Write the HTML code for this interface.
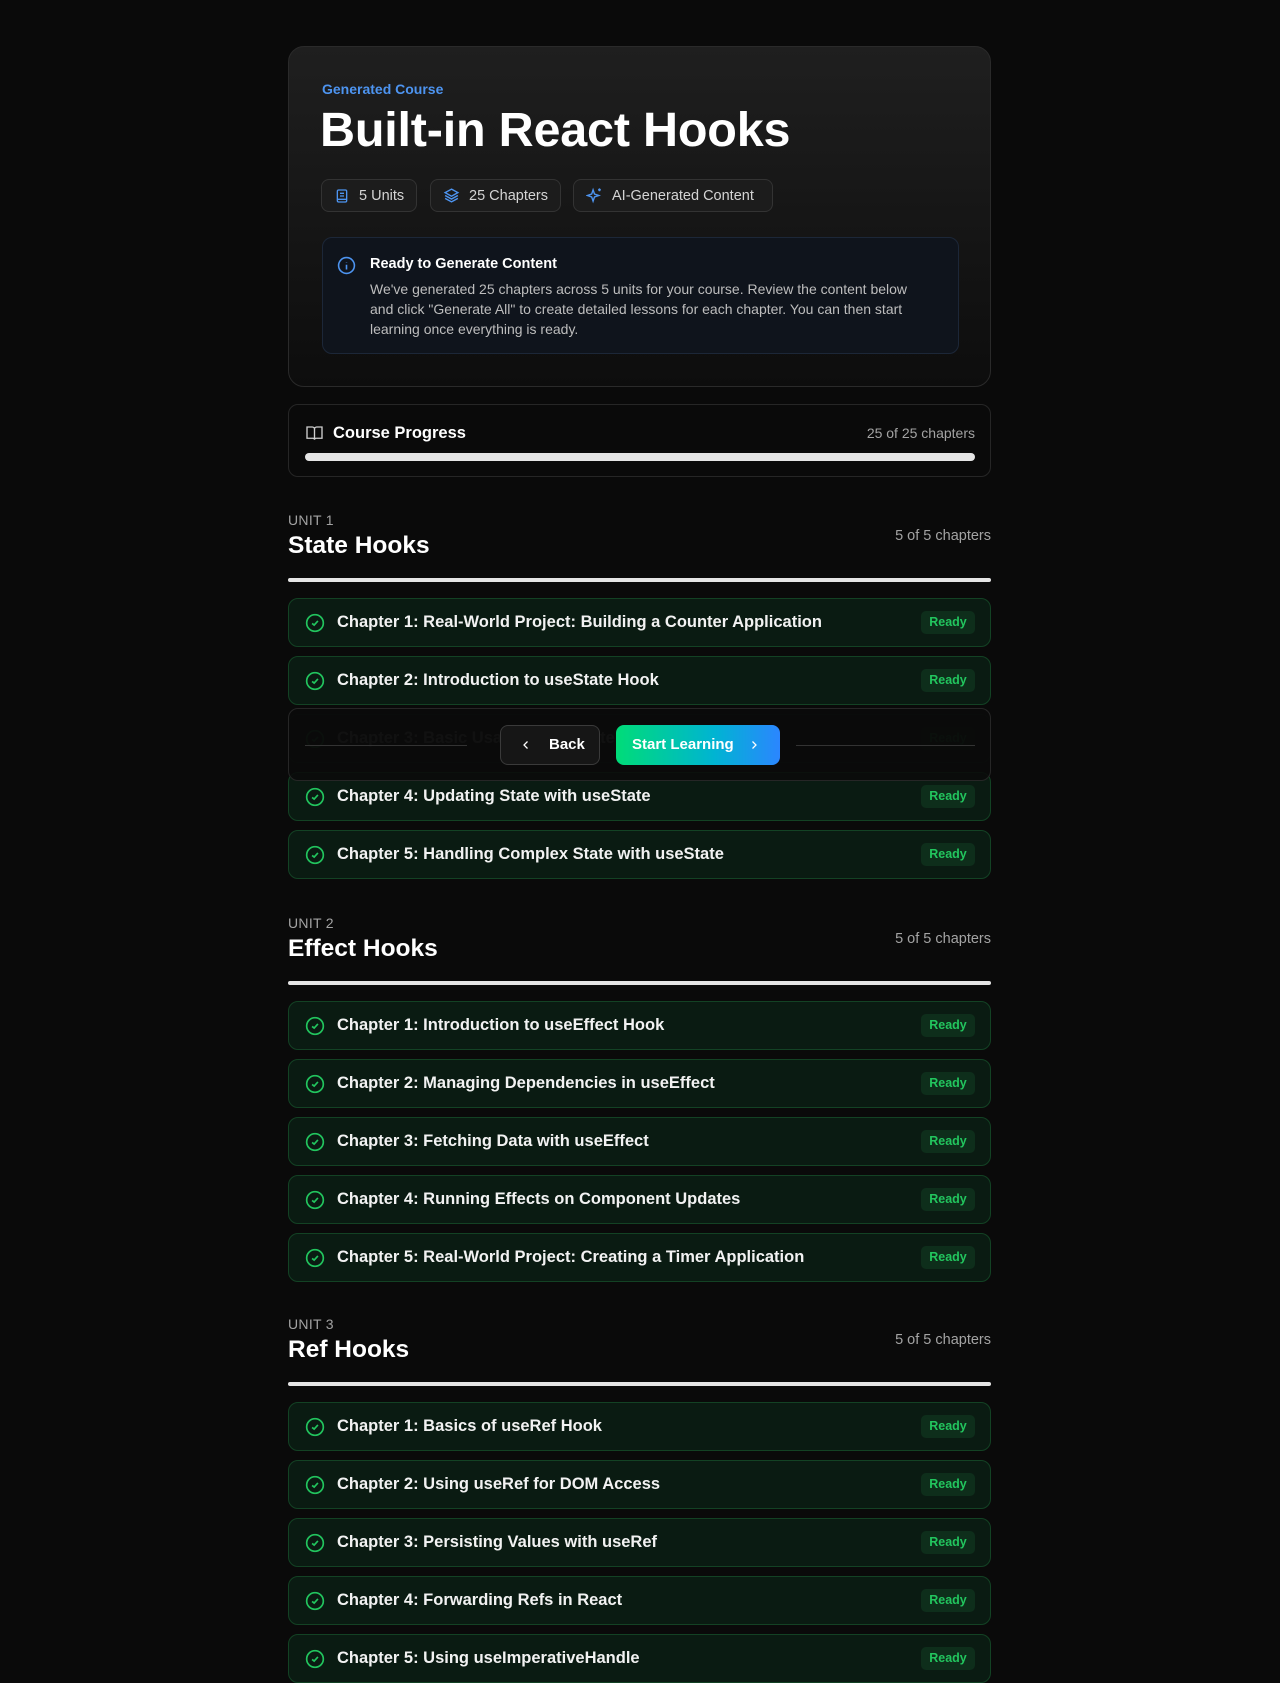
<!DOCTYPE html>
<html><head><meta charset="utf-8"><style>
*{box-sizing:border-box;margin:0;padding:0}
body{width:1280px;height:1648px;background:#0a0a0a;font-family:"Liberation Sans",sans-serif;color:#fff;position:relative;overflow:hidden}
.abs{position:absolute}
.card{left:288px;top:46px;width:703px;height:341px;border:1px solid #2a2a2a;border-radius:16px;background:linear-gradient(180deg,#1f1f1f 0%,#0d0d0d 100%)}
.badge{top:179px;height:33px;border:1px solid #333;border-radius:8px;background:#1c1c1c;display:flex;align-items:center;padding-left:12px;gap:9px;font-size:14.5px;color:#d4d4d4}
.info{left:322px;top:237px;width:637px;height:117px;border:1px solid #1c2738;border-radius:10px;background:#0f141c}
.prog{left:288px;top:404px;width:703px;height:73px;border:1px solid #262626;border-radius:10px;background:#0a0a0a}
.ulabel{font-size:14px;color:#a3a3a3;left:288px;letter-spacing:.3px}
.utitle{font-size:24.5px;font-weight:bold;left:288px}
.ucount{font-size:14.5px;color:#a3a3a3;right:289px}
.uline{left:288px;width:703px;height:4px;background:#e5e5e5;border-radius:2px}
.row{left:288px;width:703px;height:49px;border:1px solid #134224;border-radius:10px;background:#0a1b12;display:flex;align-items:center}
.row svg{position:absolute;left:16px;top:14px}
.row .t{position:absolute;left:48px;font-size:16.5px;font-weight:bold;color:#f2f2f2;top:14px}
.row .r{position:absolute;right:15px;top:12px;width:54px;height:23px;border-radius:5px;background:#0e2e1b;color:#22c55e;font-size:12.5px;font-weight:bold;text-align:center;line-height:23px}
</style></head><body>
<div class="abs card"></div>
<div class="abs" style="left:322px;top:81px;font-size:14px;color:#4d94f0;font-weight:bold">Generated Course</div>
<div class="abs" style="left:320px;top:102px;font-size:48.5px;font-weight:bold;letter-spacing:-0.2px">Built-in React Hooks</div>
<div class="abs badge" style="left:321px;width:96px"><svg width="16" height="16" viewBox="0 0 24 24" fill="none" stroke="#4d94f0" stroke-width="2"><rect x="5" y="3" width="14" height="18" rx="2"/><path d="M9 8h6M9 12h6M5 17h14"/></svg>5 Units</div>
<div class="abs badge" style="left:430px;width:131px"><svg width="17" height="17" viewBox="0 0 24 24" fill="none" stroke="#4d94f0" stroke-width="2"><path d="M12 3l9 5-9 5-9-5z"/><path d="M3 12l9 5 9-5M3 16l9 5 9-5"/></svg>25 Chapters</div>
<div class="abs badge" style="left:573px;width:200px"><svg width="17" height="17" viewBox="0 0 24 24" fill="none" stroke="#4d94f0" stroke-width="2"><path d="M10 4l2 6 6 2-6 2-2 6-2-6-6-2 6-2z"/><path d="M19 2v4M17 4h4"/></svg>AI-Generated Content</div>
<div class="abs info"></div>
<svg class="abs" style="left:337px;top:256px" width="19" height="19" viewBox="0 0 24 24" fill="none" stroke="#4d94f0" stroke-width="2"><circle cx="12" cy="12" r="10"/><path d="M12 11v6M12 7.5v.5"/></svg>
<div class="abs" style="left:370px;top:256px;font-size:14.5px;font-weight:bold">Ready to Generate Content</div>
<div class="abs" style="left:370px;top:279px;width:560px;font-size:14px;line-height:20px;color:#bdbdbd">We've generated 25 chapters across 5 units for your course. Review the content below and click "Generate All" to create detailed lessons for each chapter. You can then start learning once everything is ready.</div>
<div class="abs prog"></div>
<svg class="abs" style="left:305px;top:424px" width="19" height="18" viewBox="0 0 24 24" fill="none" stroke="#cfcfcf" stroke-width="1.8"><path d="M2 4h7a3 3 0 013 3v14a2 2 0 00-2-2H2zM22 4h-7a3 3 0 00-3 3v14a2 2 0 012-2h8z"/></svg>
<div class="abs" style="left:333px;top:424px;font-size:16.5px;font-weight:bold">Course Progress</div>
<div class="abs" style="right:305px;top:425px;font-size:14px;color:#a3a3a3">25 of 25 chapters</div>
<div class="abs" style="left:305px;top:453px;width:670px;height:8px;border-radius:4px;background:#e5e5e5"></div>

<!-- Unit 1 -->
<div class="abs ulabel" style="top:512px">UNIT 1</div>
<div class="abs utitle" style="top:532px">State Hooks</div>
<div class="abs ucount" style="top:528px">5 of 5 chapters</div>
<div class="abs uline" style="top:578px"></div>
<div class="abs row" style="top:598px"><svg width="20" height="20" viewBox="0 0 24 24" fill="none" stroke="#22c55e" stroke-width="2"><circle cx="12" cy="12" r="10"/><path d="M8.5 12.5l2.5 2 4.5-5"/></svg><span class="t">Chapter 1: Real-World Project: Building a Counter Application</span><span class="r">Ready</span></div>
<div class="abs row" style="top:656px"><svg width="20" height="20" viewBox="0 0 24 24" fill="none" stroke="#22c55e" stroke-width="2"><circle cx="12" cy="12" r="10"/><path d="M8.5 12.5l2.5 2 4.5-5"/></svg><span class="t">Chapter 2: Introduction to useState Hook</span><span class="r">Ready</span></div>
<div class="abs row" style="top:714px;opacity:.25"><svg width="20" height="20" viewBox="0 0 24 24" fill="none" stroke="#22c55e" stroke-width="2"><circle cx="12" cy="12" r="10"/><path d="M8.5 12.5l2.5 2 4.5-5"/></svg><span class="t">Chapter 3: Basic Usage of useState</span><span class="r">Ready</span></div>
<div class="abs row" style="top:772px"><svg width="20" height="20" viewBox="0 0 24 24" fill="none" stroke="#22c55e" stroke-width="2"><circle cx="12" cy="12" r="10"/><path d="M8.5 12.5l2.5 2 4.5-5"/></svg><span class="t">Chapter 4: Updating State with useState</span><span class="r">Ready</span></div>
<div class="abs row" style="top:830px"><svg width="20" height="20" viewBox="0 0 24 24" fill="none" stroke="#22c55e" stroke-width="2"><circle cx="12" cy="12" r="10"/><path d="M8.5 12.5l2.5 2 4.5-5"/></svg><span class="t">Chapter 5: Handling Complex State with useState</span><span class="r">Ready</span></div>

<!-- overlay -->
<div class="abs" style="left:288px;top:708px;width:703px;height:73px;border:1px solid #262626;border-radius:10px;background:rgba(10,10,10,.88)"></div>
<div class="abs" style="left:305px;top:745px;width:162px;height:1px;background:#333"></div>
<div class="abs" style="left:796px;top:745px;width:179px;height:1px;background:#333"></div>
<div class="abs" style="left:500px;top:725px;width:100px;height:40px;border:1px solid #3a3a3a;border-radius:8px;background:#161616;font-size:15px;font-weight:bold;line-height:38px"><svg style="position:absolute;left:19px;top:13px" width="12" height="12" viewBox="0 0 24 24" fill="none" stroke="#fff" stroke-width="2.5"><path d="M15 5l-7 7 7 7"/></svg><span style="position:absolute;left:48px">Back</span></div>
<div class="abs" style="left:616px;top:725px;width:164px;height:40px;border-radius:8px;background:linear-gradient(90deg,#00dc78 0%,#00b4d2 60%,#2b86ff 100%);font-size:15px;font-weight:bold;line-height:40px"><span style="position:absolute;left:16px">Start Learning</span><svg style="position:absolute;left:132px;top:14px" width="12" height="12" viewBox="0 0 24 24" fill="none" stroke="#fff" stroke-width="2.5"><path d="M9 5l7 7-7 7"/></svg></div>

<!-- Unit 2 -->
<div class="abs ulabel" style="top:915px">UNIT 2</div>
<div class="abs utitle" style="top:935px">Effect Hooks</div>
<div class="abs ucount" style="top:931px">5 of 5 chapters</div>
<div class="abs uline" style="top:981px"></div>
<div class="abs row" style="top:1001px"><svg width="20" height="20" viewBox="0 0 24 24" fill="none" stroke="#22c55e" stroke-width="2"><circle cx="12" cy="12" r="10"/><path d="M8.5 12.5l2.5 2 4.5-5"/></svg><span class="t">Chapter 1: Introduction to useEffect Hook</span><span class="r">Ready</span></div>
<div class="abs row" style="top:1059px"><svg width="20" height="20" viewBox="0 0 24 24" fill="none" stroke="#22c55e" stroke-width="2"><circle cx="12" cy="12" r="10"/><path d="M8.5 12.5l2.5 2 4.5-5"/></svg><span class="t">Chapter 2: Managing Dependencies in useEffect</span><span class="r">Ready</span></div>
<div class="abs row" style="top:1117px"><svg width="20" height="20" viewBox="0 0 24 24" fill="none" stroke="#22c55e" stroke-width="2"><circle cx="12" cy="12" r="10"/><path d="M8.5 12.5l2.5 2 4.5-5"/></svg><span class="t">Chapter 3: Fetching Data with useEffect</span><span class="r">Ready</span></div>
<div class="abs row" style="top:1175px"><svg width="20" height="20" viewBox="0 0 24 24" fill="none" stroke="#22c55e" stroke-width="2"><circle cx="12" cy="12" r="10"/><path d="M8.5 12.5l2.5 2 4.5-5"/></svg><span class="t">Chapter 4: Running Effects on Component Updates</span><span class="r">Ready</span></div>
<div class="abs row" style="top:1233px"><svg width="20" height="20" viewBox="0 0 24 24" fill="none" stroke="#22c55e" stroke-width="2"><circle cx="12" cy="12" r="10"/><path d="M8.5 12.5l2.5 2 4.5-5"/></svg><span class="t">Chapter 5: Real-World Project: Creating a Timer Application</span><span class="r">Ready</span></div>

<!-- Unit 3 -->
<div class="abs ulabel" style="top:1316px">UNIT 3</div>
<div class="abs utitle" style="top:1336px">Ref Hooks</div>
<div class="abs ucount" style="top:1332px">5 of 5 chapters</div>
<div class="abs uline" style="top:1382px"></div>
<div class="abs row" style="top:1402px"><svg width="20" height="20" viewBox="0 0 24 24" fill="none" stroke="#22c55e" stroke-width="2"><circle cx="12" cy="12" r="10"/><path d="M8.5 12.5l2.5 2 4.5-5"/></svg><span class="t">Chapter 1: Basics of useRef Hook</span><span class="r">Ready</span></div>
<div class="abs row" style="top:1460px"><svg width="20" height="20" viewBox="0 0 24 24" fill="none" stroke="#22c55e" stroke-width="2"><circle cx="12" cy="12" r="10"/><path d="M8.5 12.5l2.5 2 4.5-5"/></svg><span class="t">Chapter 2: Using useRef for DOM Access</span><span class="r">Ready</span></div>
<div class="abs row" style="top:1518px"><svg width="20" height="20" viewBox="0 0 24 24" fill="none" stroke="#22c55e" stroke-width="2"><circle cx="12" cy="12" r="10"/><path d="M8.5 12.5l2.5 2 4.5-5"/></svg><span class="t">Chapter 3: Persisting Values with useRef</span><span class="r">Ready</span></div>
<div class="abs row" style="top:1576px"><svg width="20" height="20" viewBox="0 0 24 24" fill="none" stroke="#22c55e" stroke-width="2"><circle cx="12" cy="12" r="10"/><path d="M8.5 12.5l2.5 2 4.5-5"/></svg><span class="t">Chapter 4: Forwarding Refs in React</span><span class="r">Ready</span></div>
<div class="abs row" style="top:1634px"><svg width="20" height="20" viewBox="0 0 24 24" fill="none" stroke="#22c55e" stroke-width="2"><circle cx="12" cy="12" r="10"/><path d="M8.5 12.5l2.5 2 4.5-5"/></svg><span class="t">Chapter 5: Using useImperativeHandle</span><span class="r">Ready</span></div>
</body></html>
